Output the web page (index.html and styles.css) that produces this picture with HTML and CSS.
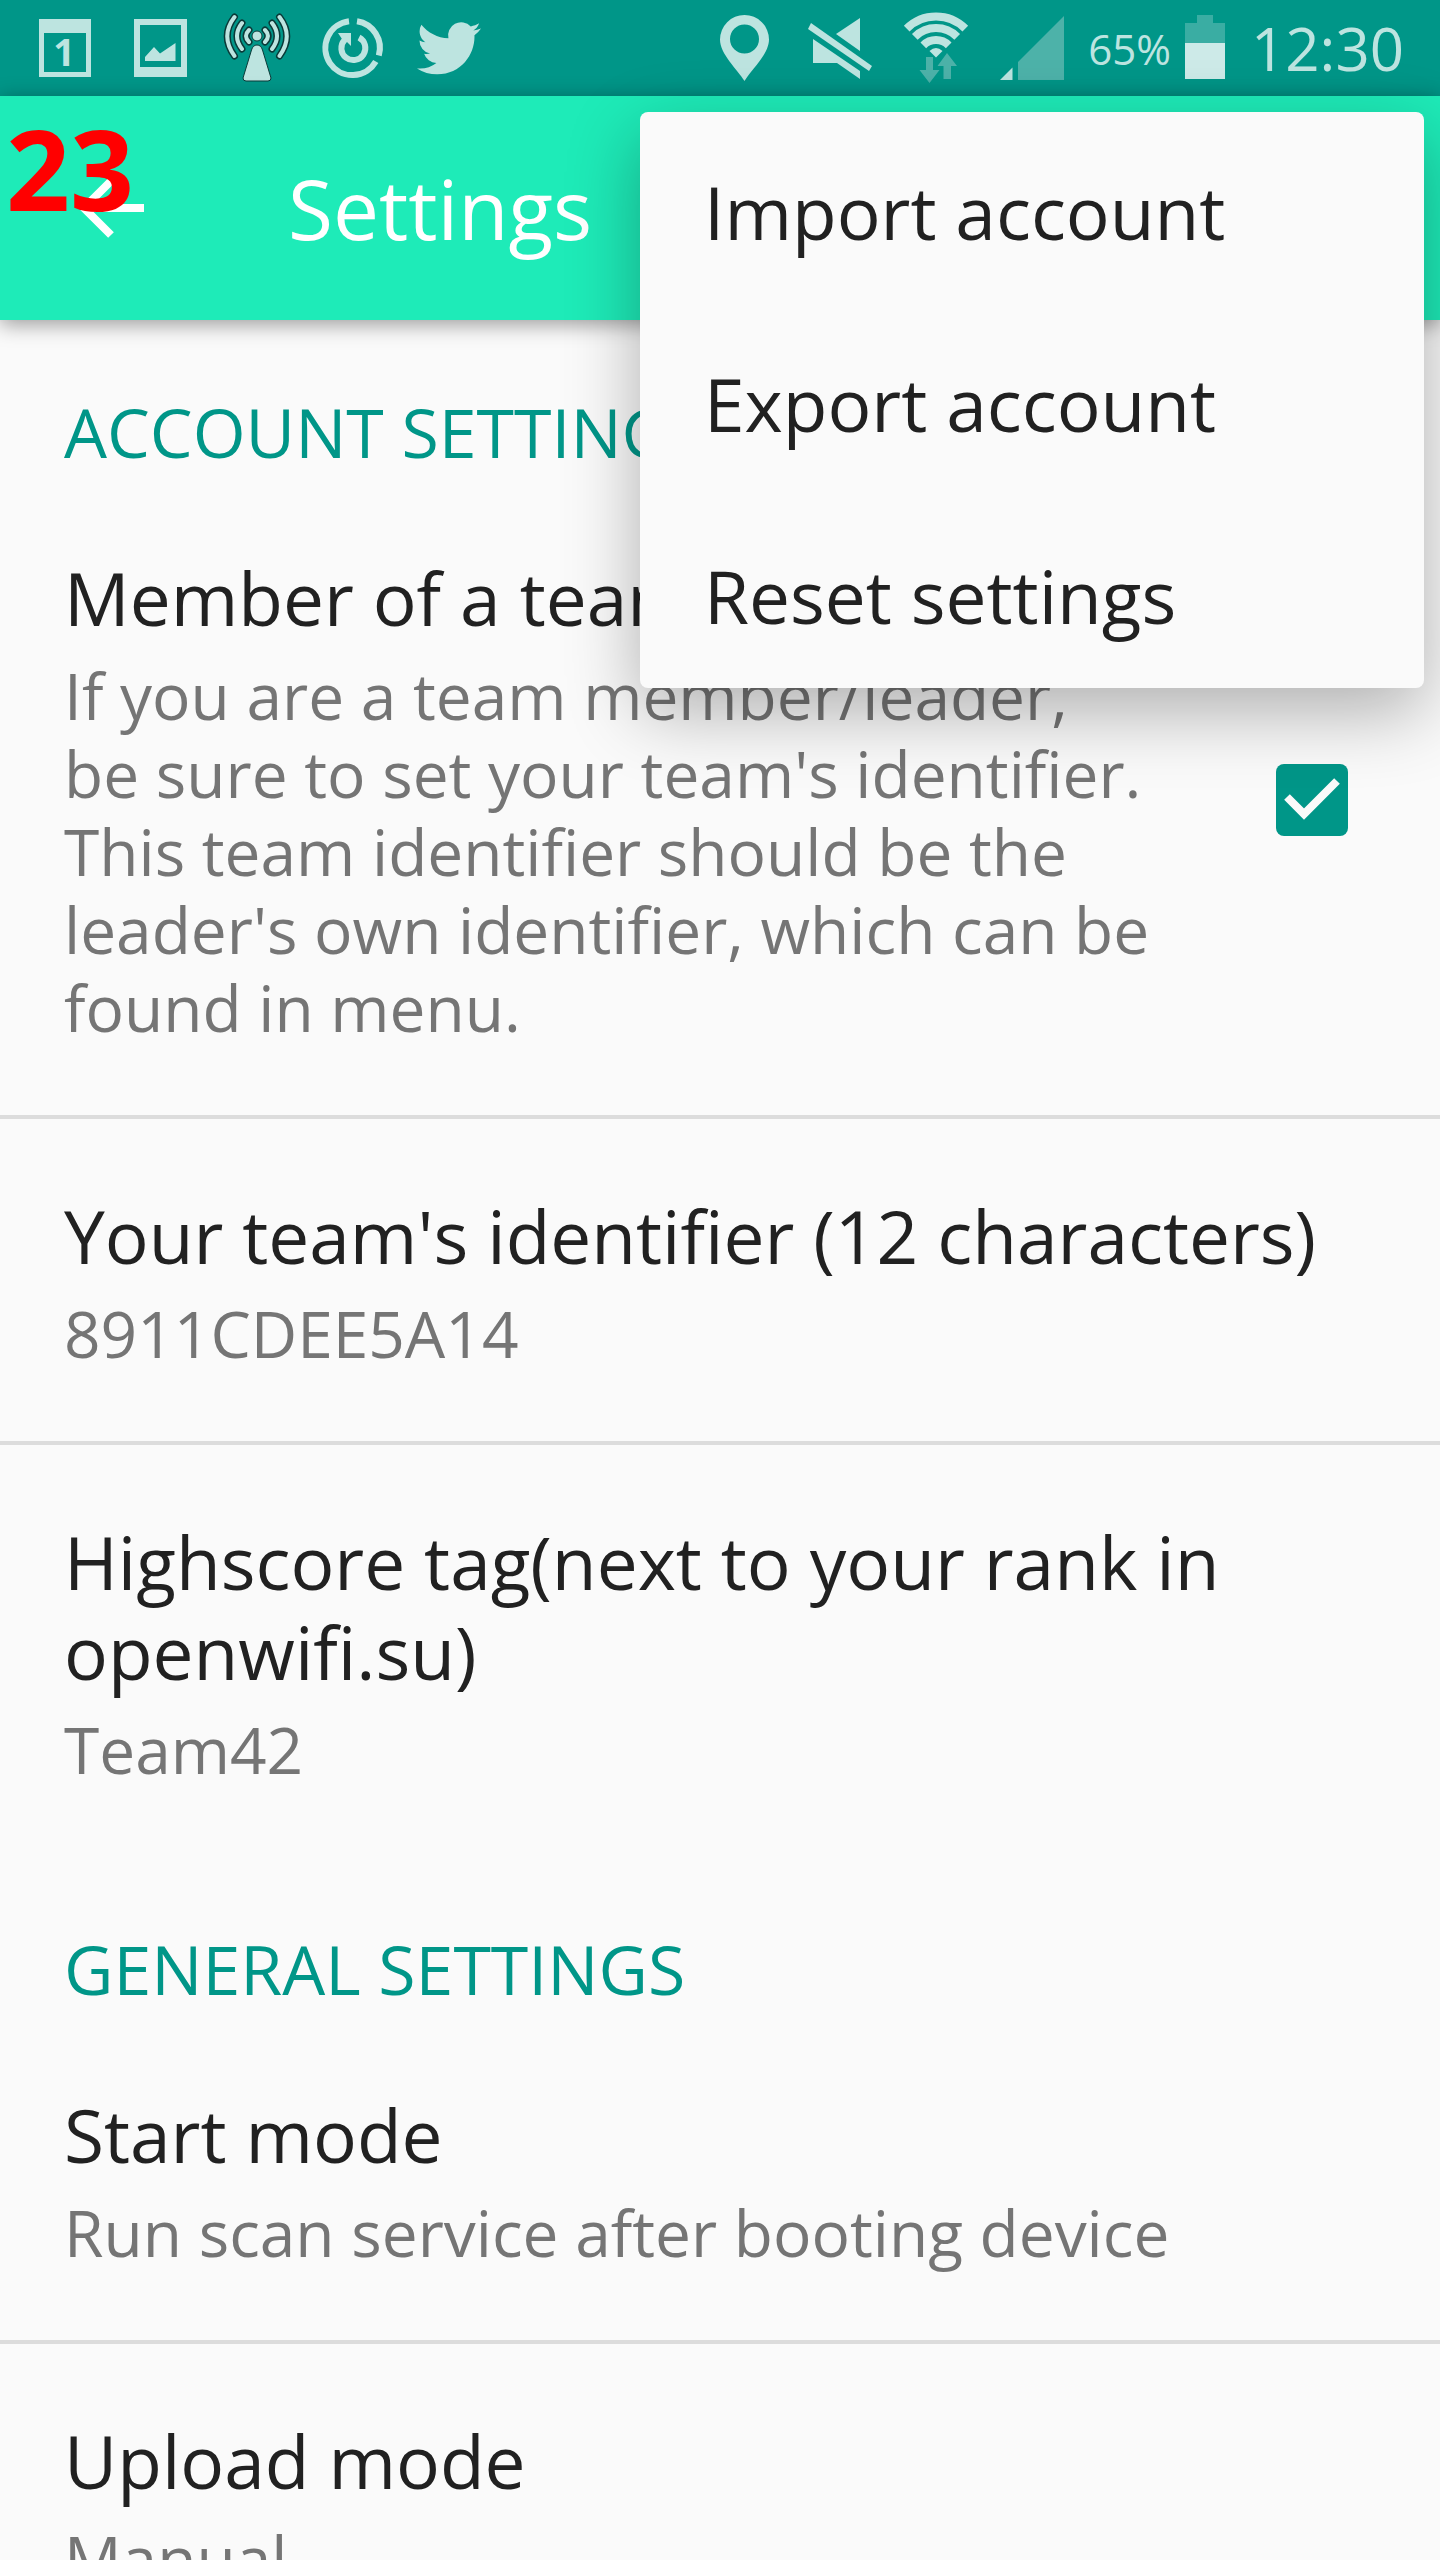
FILE: index.html
```html
<!DOCTYPE html>
<html lang="en">
<head>
  <meta charset="UTF-8" />
  <title>Settings</title>
  <link rel="stylesheet" href="styles.css">
</head>
<body>
  <div class="status-bar">
    <div class="status-group">
      <svg class="icon" viewBox="0 0 64 96">
        <path fill-rule="evenodd" d="M6 19H58V77H6ZM11 33V72H53V33Z" />
        <text class="icon-day" x="31" y="66" text-anchor="middle">1</text>
      </svg>
      <svg class="icon" viewBox="0 0 64 96">
        <path fill-rule="evenodd" d="M5 19H58V77H5ZM11 25V67H52V25Z" />
        <path d="M16 61V57L25 47L31 53.500L46.500 43V61Z" />
      </svg>
      <svg class="icon" viewBox="0 0 64 96">
        <g class="outline">
          <path d="M9.500 17Q-5 36 9.500 56M54.500 17Q69 36 54.500 56" />
          <path d="M17 23Q7 36 17 49M47 23Q57 36 47 49" />
          <path d="M24 30Q18 36 24 42M40 30Q46 36 40 42" />
        </g>
        <g class="wave">
          <path d="M9.500 17Q-5 36 9.500 56M54.500 17Q69 36 54.500 56" />
          <path d="M17 23Q7 36 17 49M47 23Q57 36 47 49" />
          <path d="M24 30Q18 36 24 42M40 30Q46 36 40 42" />
        </g>
        <g class="tower">
          <circle cx="32" cy="36" r="5" />
          <path d="M32 45Q36 45 37.500 50L46 78Q46 81 43 81H21Q18 81 18 78L26.500 50Q28 45 32 45Z" />
        </g>
      </svg>
      <svg class="icon" viewBox="0 0 64 96">
        <g class="ring">
          <path d="M36 21.300A27 27 0 0 1 57.800 55.500" />
          <path d="M28 21.300A27 27 0 1 0 54.800 61.500" />
          <path d="M38 37.500A12 12 0 1 1 23.500 40" />
        </g>
        <path d="M17 33H30V46L26 42L22 44L21 39Z" />
      </svg>
      <svg class="icon" viewBox="0 -15 24 36">
        <path transform="translate(0 -8.900)" d="M23.953 4.570a10 10 0 01-2.825.775 4.958 4.958 0 002.163-2.723c-.951.555-2.005.959-3.127 1.184a4.920 4.920 0 00-8.384 4.482C7.690 8.095 4.067 6.130 1.640 3.162a4.822 4.822 0 00-.666 2.475c0 1.710.870 3.213 2.188 4.096a4.904 4.904 0 01-2.228-.616v.060a4.923 4.923 0 003.946 4.827 4.996 4.996 0 01-2.212.085 4.936 4.936 0 004.604 3.417 9.867 9.867 0 01-6.102 2.105c-.390 0-.779-.023-1.170-.067a13.995 13.995 0 007.557 2.209c9.053 0 13.998-7.496 13.998-13.985 0-.210 0-.420-.015-.630A9.935 9.935 0 0024 4.590z" />
      </svg>
    </div>

    <div class="status-group">
      <svg class="icon" viewBox="0 0 64 96">
        <path fill-rule="evenodd" d="M32.500 81C25 69 8 54 8 39.500A24.500 24.500 0 0 1 57 39.500C57 54 40 69 32.500 81ZM32.500 24.500A14.500 14.500 0 1 0 32.500 53.500A14.500 14.500 0 1 0 32.500 24.500Z" />
      </svg>
      <svg class="icon" viewBox="0 0 64 96">
        <path d="M3 23L64 66L61 71L0 29Z" />
        <path d="M52 18V51L28 34Z" />
        <path d="M5 39L52 71V79L29 63H5Z" />
      </svg>
      <svg class="icon" viewBox="0 0 64 96">
        <g class="wifi">
          <path d="M2.700 28.700A41.500 41.500 0 0 1 61.300 28.700" />
          <path d="M10.800 36.800A30 30 0 0 1 53.200 36.800" />
          <path d="M19.300 45.300A18 18 0 0 1 44.700 45.300" />
        </g>
        <path d="M25.500 51Q32 45 38.500 51L32 57.500Z" />
        <path class="faint" d="M22 57H29V70H35.500L25.500 83L15.500 70H22Z" />
        <path class="faint" d="M39.500 79V66H33.500L43 53L53 66H47V79Z" />
      </svg>
      <svg class="icon" viewBox="0 0 64 96">
        <path d="M0 80L12.500 67.500V80Z" />
        <path class="faint" d="M18 62L64 16V80H18Z" />
      </svg>
      <span class="battery-text">65%</span>
      <svg class="battery" viewBox="0 0 40 96">
        <path class="battery-empty" d="M12 15H28V23H40V43H0V23H12Z" />
        <rect class="battery-full" y="43" width="40" height="36" />
      </svg>
      <span class="clock">12:30</span>
    </div>
  </div>

  <header class="app-bar">
    <button class="back" aria-label="Back">
      <svg viewBox="0 0 64 60">
        <path d="M31 3L4 30L31 57M4 30H64" />
      </svg>
    </button>
    <h1 class="app-title">Settings</h1>
    <span class="step">23</span>
  </header>

  <ul class="menu">
    <li><button class="menu-item">Import account</button></li>
    <li><button class="menu-item">Export account</button></li>
    <li><button class="menu-item">Reset settings</button></li>
  </ul>

  <main>
    <section>
      <h2 class="category">ACCOUNT SETTINGS</h2>
      <label class="pref" for="team">
        <span class="pref-text">
          <span class="pref-title">Member of a team</span>
          <span class="pref-summary">If you are a team member/leader,<br> be sure to set your team's identifier.<br> This team identifier should be the<br> leader's own identifier, which can be<br> found in menu.</span>
        </span>
        <span class="check">
          <input type="checkbox" id="team" checked>
          <svg viewBox="0 0 72 72"><path d="M11 33L28 50L61 17" /></svg>
        </span>
      </label>
      <button class="pref">
        <span class="pref-text">
          <span class="pref-title">Your team's identifier (12 characters)</span>
          <span class="pref-summary">8911CDEE5A14</span>
        </span>
      </button>
      <button class="pref">
        <span class="pref-text">
          <span class="pref-title">Highscore tag(next to your rank in<br> openwifi.su)</span>
          <span class="pref-summary">Team42</span>
        </span>
      </button>
    </section>

    <section>
      <h2 class="category">GENERAL SETTINGS</h2>
      <button class="pref">
        <span class="pref-text">
          <span class="pref-title">Start mode</span>
          <span class="pref-summary">Run scan service after booting device</span>
        </span>
      </button>
      <button class="pref">
        <span class="pref-text">
          <span class="pref-title">Upload mode</span>
          <span class="pref-summary">Manual</span>
        </span>
      </button>
    </section>
  </main>
</body>
</html>
```
FILE: styles.css
```css
* {
  box-sizing: border-box;
}

body {
  margin: 0;
  height: 100vh;
  overflow: hidden;
  position: relative;
  background: #fafafa;
  color: #212121;
  font-family: 'Open Sans', sans-serif;
}

button {
  margin: 0;
  padding: 0;
  border: 0;
  background: none;
  color: inherit;
  font: inherit;
  text-align: left;
}

/* status bar */
.status-bar {
  display: flex;
  justify-content: space-between;
  height: 96px;
  padding: 0 36px 0 33px;
  background: #009688;
  color: #bde4e0;
}

.status-group {
  display: flex;
  align-items: center;
  gap: 32px;
}

.icon {
  width: 64px;
  height: 96px;
  fill: #bde4e0;
  overflow: visible;
}

.icon-day {
  font-size: 38px;
  font-weight: bold;
}

.outline,
.wave,
.ring,
.wifi {
  fill: none;
  stroke: #bde4e0;
}

.outline {
  stroke: #0a3a38;
  stroke-width: 7px;
  stroke-linecap: round;
}

.wave {
  stroke-width: 4px;
  stroke-linecap: round;
}

.tower {
  stroke: #0a3a38;
  stroke-width: 1px;
}

.ring {
  stroke-width: 6px;
}

.wifi {
  stroke-width: 8px;
}

.faint {
  fill: #4db2a9;
}

.battery {
  width: 40px;
  height: 96px;
  margin-left: -18px;
}

.battery-empty {
  fill: #3aada3;
}

.battery-full {
  fill: #cdeae8;
}

.battery-text {
  margin-left: -8px;
  font-size: 42px;
}

.clock {
  margin-left: -6px;
  font-size: 60px;
}

/* app bar */
.app-bar {
  position: relative;
  display: flex;
  align-items: center;
  height: 224px;
  padding: 0 80px;
  gap: 144px;
  background: #1eebb8;
  color: #fff;
  box-shadow: 0 4px 20px rgba(0, 0, 0, 0.4);
}

.back svg {
  display: block;
  width: 64px;
  height: 60px;
  fill: none;
  stroke: #fff;
  stroke-width: 8px;
}

.app-title {
  margin: 0;
  font-size: 82px;
  font-weight: normal;
}

.step {
  position: absolute;
  top: 8px;
  left: 6px;
  color: #f00;
  font-size: 112px;
  font-weight: bold;
  line-height: 128px;
}

/* overflow menu */
.menu {
  position: absolute;
  top: 112px;
  right: 16px;
  z-index: 2;
  width: 784px;
  margin: 0;
  padding: 0;
  list-style: none;
  background: #fafafa;
  border-radius: 8px;
  box-shadow: 0 24px 72px rgba(0, 0, 0, 0.3);
}

.menu-item {
  display: block;
  width: 100%;
  height: 192px;
  padding: 6px 64px 0;
  font-size: 73px;
}

/* preferences */
.category {
  margin: 0;
  padding: 74px 64px 11px;
  color: #009688;
  font-size: 68px;
  font-weight: normal;
  line-height: 76px;
}

.pref {
  display: flex;
  align-items: center;
  justify-content: space-between;
  width: 100%;
  padding: 72px 92px 68px 64px;
}

.pref + .pref {
  border-top: 4px solid #dcdcdc;
}

.pref-text {
  display: flex;
  flex-direction: column;
  gap: 14px;
  white-space: nowrap;
}

.pref-title {
  font-size: 73px;
  line-height: 90px;
}

.pref-summary {
  color: #757575;
  font-size: 64px;
  line-height: 78px;
}

.check {
  position: relative;
  width: 72px;
  height: 72px;
}

.check input {
  display: block;
  appearance: none;
  width: 72px;
  height: 72px;
  margin: 0;
  border-radius: 8px;
  background: #009688;
}

.check svg {
  position: absolute;
  inset: 0;
  fill: none;
  stroke: #fafafa;
  stroke-width: 8px;
}
```
